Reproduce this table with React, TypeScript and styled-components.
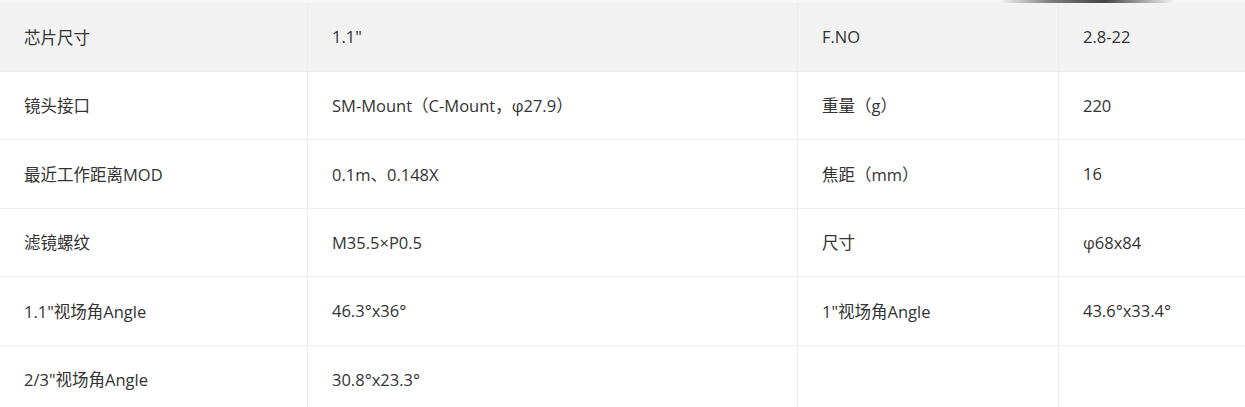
import styled, { createGlobalStyle } from "styled-components";

const GlobalStyle = createGlobalStyle`
  html, body {
    margin: 0;
    padding: 0;
    background: #fff;
  }
`;

const rows: string[][] = [
  ["芯片尺寸", "1.1\"", "F.NO", "2.8-22"],
  ["镜头接口", "SM-Mount（C-Mount，φ27.9）", "重量（g）", "220"],
  ["最近工作距离MOD", "0.1m、0.148X", "焦距（mm）", "16"],
  ["滤镜螺纹", "M35.5×P0.5", "尺寸", "φ68x84"],
  ["1.1\"视场角Angle", "46.3°x36°", "1\"视场角Angle", "43.6°x33.4°"],
  ["2/3\"视场角Angle", "30.8°x23.3°", "", ""],
];

const colWidths = [308, 490, 261, 186];

const Page = styled.div`
  position: relative;
  width: 1245px;
  height: 407px;
  overflow: hidden;
  padding-top: 3px;
  box-sizing: border-box;
  background: #f5f6f8;
`;

const ScrollShadow = styled.div`
  position: absolute;
  top: 0;
  left: 1000px;
  width: 175px;
  height: 3px;
  background: linear-gradient(
    to right,
    rgba(40, 40, 40, 0) 0%,
    rgba(40, 40, 40, 0.6) 30%,
    rgba(40, 40, 40, 0.85) 60%,
    rgba(40, 40, 40, 0) 100%
  );
`;

const Table = styled.table`
  width: 1245px;
  border-collapse: separate;
  border-spacing: 0;
  table-layout: fixed;
  background: #fff;
  font-family: "Open Sans", "Noto Sans CJK SC", sans-serif;
  font-size: 16.5px;
  color: #333;
`;

const Row = styled.tr<{ $shaded?: boolean }>`
  height: 68.5px;
  background: ${({ $shaded }) => ($shaded ? "#f2f2f2" : "#fff")};
`;

const Cell = styled.td`
  box-sizing: border-box;
  padding: 0 24px;
  border-right: 1px solid #ececec;
  border-bottom: 1px solid #ececec;
  vertical-align: middle;
  white-space: nowrap;
  &:last-child {
    border-right: none;
  }
`;

export default function App() {
  return (
    <>
      <GlobalStyle />
      <Page>
        <ScrollShadow />
        <Table>
          <colgroup>
            {colWidths.map((w, i) => (
              <col key={i} style={{ width: w }} />
            ))}
          </colgroup>
          <tbody>
            {rows.map((r, i) => (
              <Row key={i} $shaded={i === 0}>
                {r.map((c, j) => (
                  <Cell key={j}>{c}</Cell>
                ))}
              </Row>
            ))}
          </tbody>
        </Table>
      </Page>
    </>
  );
}
